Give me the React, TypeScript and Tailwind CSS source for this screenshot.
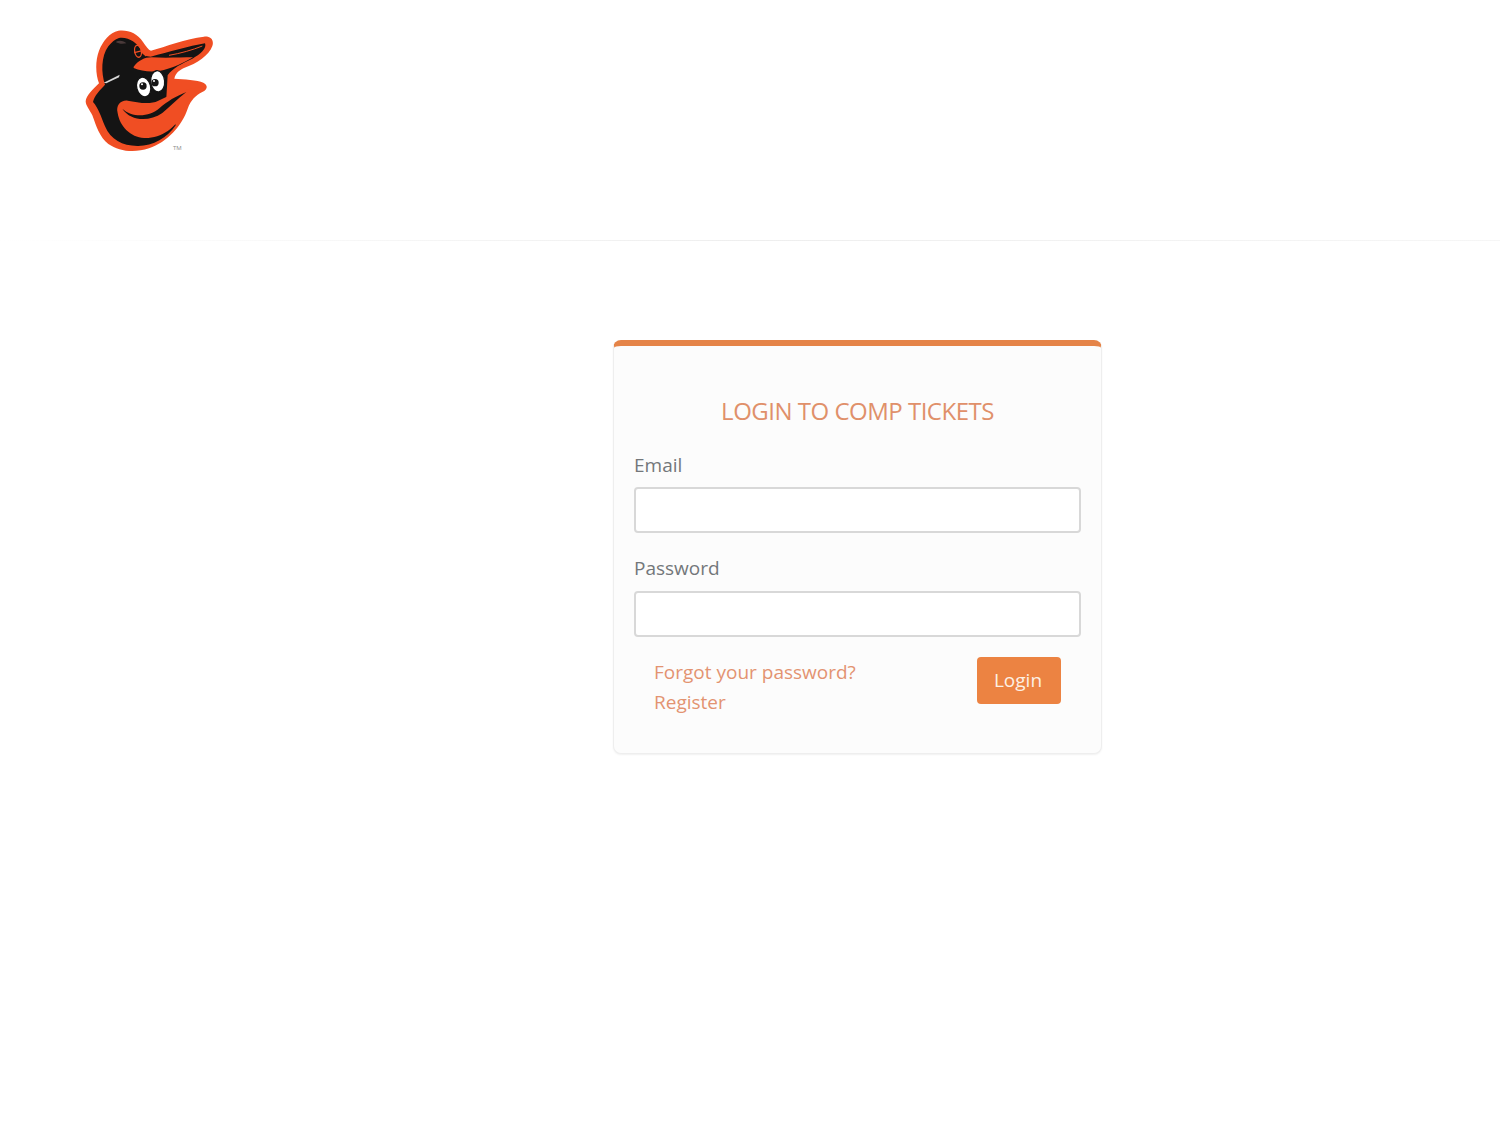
function Logo() {
  return (
    <svg width="160" height="145" viewBox="0 0 480 435" aria-label="Orioles logo" role="img" className="blur-[0.5px]">
      {/* orange outline */}
      <path
        d="M148 38 C175 34 205 45 222 72 C232 86 238 96 246 98 C290 86 350 62 405 56 C425 54 436 66 430 84 C420 112 385 136 345 150 C332 156 320 164 316 182 C345 184 385 186 403 194 C418 202 416 214 400 222 C380 232 366 246 356 272 C340 322 295 372 240 391 C195 406 150 400 118 378 C92 358 82 325 70 292 C62 276 50 262 50 250 C52 232 72 214 90 196 C80 170 78 130 90 98 C102 68 122 44 148 38 Z"
        fill="#f04e23"
      />
      {/* black head and body */}
      <path
        d="M150 60 C178 56 205 74 218 100 C224 112 232 116 245 116 C300 102 360 84 408 76 C414 90 396 108 370 122 C340 136 310 150 296 172 L292 240 L320 322 C295 360 250 385 205 384 C160 384 125 365 108 325 C96 295 88 270 72 252 C76 232 92 218 108 200 C96 165 96 115 118 85 C128 72 138 64 150 60 Z"
        fill="#141414"
      />
      {/* white neck stripe */}
      <path d="M104 194 L152 170 L150 178 L112 196 Z" fill="#d8d8d8" />
      {/* cap logo */}
      <ellipse cx="207" cy="100" rx="10" ry="18" fill="none" stroke="#f04e23" strokeWidth="4" transform="rotate(-10 207 100)" />
      <path d="M196 104 L220 98 M218 102 L232 114" stroke="#f04e23" strokeWidth="4" fill="none" />
      <path d="M140 72 C150 66 165 68 172 76 C160 78 150 78 140 72 Z" fill="#4a3a3a" />
      {/* upper beak */}
      <path d="M194 146 C208 128 226 118 248 118 C290 120 335 118 372 118 C345 134 310 152 270 159 C245 162 215 160 194 150 Z" fill="#f04e23" />
      <path d="M300 112 C335 106 370 96 400 84" stroke="#f04e23" strokeWidth="3" fill="none" />
      {/* cheek and lower beak */}
      <path d="M146 285 C140 262 155 246 176 248 C205 252 240 262 268 248 C300 232 350 212 398 206 C370 222 352 250 340 285 C322 330 275 362 225 360 C185 358 152 325 146 285 Z" fill="#f04e23" />
      <path d="M160 272 C190 300 240 298 272 270 C295 250 320 235 352 222 C325 242 305 265 280 285 C240 312 185 310 160 272 Z" fill="#141414" />
      <path d="M168 284 C195 312 240 312 282 290 C240 322 195 318 168 284 Z" fill="#f04e23" />
      {/* eyes */}
      <ellipse cx="224" cy="207" rx="21" ry="30" fill="#fff" stroke="#141414" strokeWidth="4" transform="rotate(-14 224 207)" />
      <ellipse cx="266" cy="190" rx="21" ry="32" fill="#fff" stroke="#141414" strokeWidth="4" transform="rotate(-6 266 190)" />
      <circle cx="222" cy="204" r="11" fill="#141414" />
      <circle cx="258" cy="194" r="11" fill="#141414" />
      <circle cx="219" cy="199" r="3" fill="#fff" />
      <circle cx="255" cy="189" r="3" fill="#fff" />
    </svg>
  );
}

export default function App() {
  return (
    <div className="min-h-[1126px] bg-white text-[#73777a]" style={{ fontFamily: '"Open Sans", sans-serif' }}>
      <header className="h-[240px] pl-[69px] pt-[18px]">
        <div className="relative w-[160px]">
          <Logo />
          <span className="absolute left-[104px] top-[127px] text-[6px] leading-none text-[#8b8b8b]">TM</span>
        </div>
      </header>
      <div className="h-px bg-gradient-to-r from-white via-[#eeeeee] to-[#f6f6f6]" />

      <main className="pl-[613px] pt-[99px]">
        <section className="box-border h-[414px] w-[489px] rounded-[8px] border border-t-[6px] border-[#eeeeee] border-t-[#e58448] bg-[#fcfcfc] px-5 pt-[46px] shadow-[0_1px_2px_rgba(0,0,0,0.06)]">
          <h1 className="text-center text-[24px] leading-[38px] font-normal tracking-[-0.5px] text-[#e0906a]">
            LOGIN TO COMP TICKETS
          </h1>

          <form>
            <label className="mt-[23px] block text-[19px] leading-[24px]">Email</label>
            <input
              type="email"
              className="mt-[10px] box-border block h-[46px] w-[447px] rounded-[4px] border-2 border-[#d8d8d8] bg-white"
            />
            <label className="mt-[23px] block text-[19px] leading-[24px]">Password</label>
            <input
              type="password"
              className="mt-[11px] box-border block h-[46px] w-[447px] rounded-[4px] border-2 border-[#d8d8d8] bg-white"
            />

            <div className="mt-[20px] flex items-start justify-between px-5">
              <div className="text-[19px] leading-[30px] text-[#e39371]">
                <a className="block" href="#">Forgot your password?</a>
                <a className="block" href="#">Register</a>
              </div>
              <button
                type="button"
                className="h-[47px] w-[84px] rounded-[4px] bg-[#ec8342] pr-[2px] text-[19px] text-[#fdf0e4]"
              >
                Login
              </button>
            </div>
          </form>
        </section>
      </main>
    </div>
  );
}
